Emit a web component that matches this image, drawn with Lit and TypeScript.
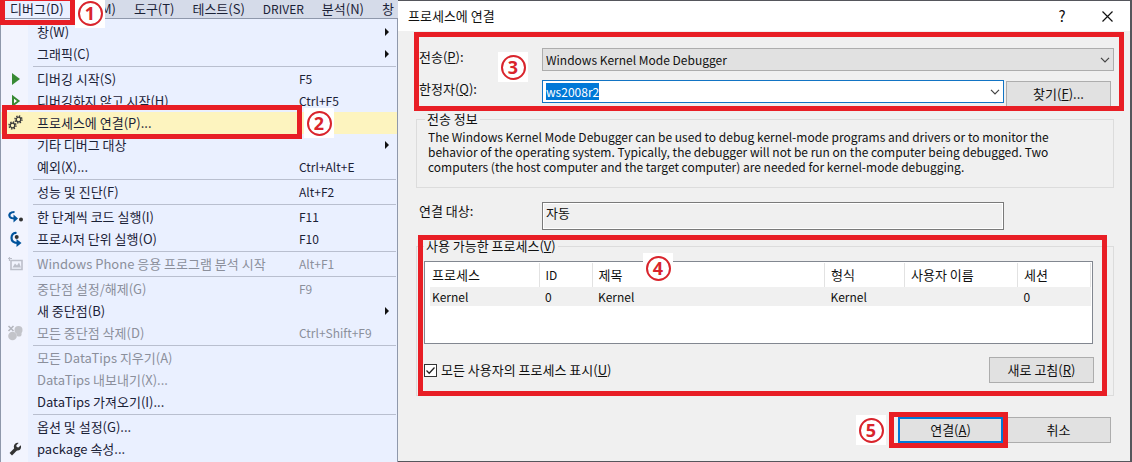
import { LitElement, html, css, svg, nothing } from "lit";
import { customElement, property, query } from "lit/decorators.js";
import { classMap } from "lit/directives/class-map.js";

type Item = {
  label: string;
  keys?: string;
  icon?: string;
  sub?: boolean;
  disabled?: boolean;
  active?: boolean;
};

const groups: Item[][] = [
  [
    { label: "창(W)", sub: true },
    { label: "그래픽(C)", sub: true },
  ],
  [
    { label: "디버깅 시작(S)", keys: "F5", icon: "play" },
    { label: "디버깅하지 않고 시작(H)", keys: "Ctrl+F5", icon: "playOutline" },
    { label: "프로세스에 연결(P)...", icon: "gears", active: true },
    { label: "기타 디버그 대상", sub: true },
    { label: "예외(X)...", keys: "Ctrl+Alt+E" },
  ],
  [{ label: "성능 및 진단(F)", keys: "Alt+F2" }],
  [
    { label: "한 단계씩 코드 실행(I)", keys: "F11", icon: "stepInto" },
    { label: "프로시저 단위 실행(O)", keys: "F10", icon: "stepOver" },
  ],
  [{ label: "Windows Phone 응용 프로그램 분석 시작", keys: "Alt+F1", icon: "analysis", disabled: true }],
  [
    { label: "중단점 설정/해제(G)", keys: "F9", disabled: true },
    { label: "새 중단점(B)", sub: true },
    { label: "모든 중단점 삭제(D)", keys: "Ctrl+Shift+F9", icon: "breakpoints", disabled: true },
  ],
  [
    { label: "모든 DataTips 지우기(A)", disabled: true },
    { label: "DataTips 내보내기(X)...", disabled: true },
    { label: "DataTips 가져오기(I)..." },
  ],
  [{ label: "옵션 및 설정(G)..." }, { label: "package 속성...", icon: "wrench" }],
];

const icons: Record<string, unknown> = {
  play: svg`<path d="M5 2v12l8-6z" fill="#388a34"/>`,
  playOutline: svg`<path d="M6 3.800v8.400L11.500 8z" fill="#fff" stroke="#388a34" stroke-width="2"/>`,
  gears: svg`
    <g fill="none" stroke="#3a3a3a">
      <circle cx="11.500" cy="4.500" r="2.300" stroke-width="1.300"/>
      <circle cx="11.500" cy="4.500" r="3.500" stroke-width="1.400" stroke-dasharray="1.375"/>
      <circle cx="5.500" cy="10.500" r="2.300" stroke-width="1.300"/>
      <circle cx="5.500" cy="10.500" r="3.500" stroke-width="1.400" stroke-dasharray="1.375"/>
    </g>`,
  stepInto: svg`
    <path d="M7.500 3C3 3 1.500 5.500 2.800 7.800 3.700 9.300 5.500 9.500 8 9.500" fill="none" stroke="#00539c" stroke-width="2.200"/>
    <path d="M6.500 5.500l4.500 4-4.500 4z" fill="#00539c"/>
    <circle cx="14" cy="10.500" r="2" fill="#333"/>`,
  stepOver: svg`
    <path d="M9.500 2C6 1.500 4.500 4 4.500 7c0 3.500 2.500 5 7 5" fill="none" stroke="#00539c" stroke-width="2.200"/>
    <path d="M9.500 8l5 4-5 4z" fill="#00539c"/>
    <circle cx="9.700" cy="6" r="2" fill="#333"/>`,
  analysis: svg`
    <g fill="none" stroke="#bcbfca">
      <path d="M4 4.500h11v9h-11z" stroke-width="1.600"/>
      <path d="M1 2.500h4M2.500 1v4" stroke-width="1.200"/>
    </g>
    <path d="M5.500 11.500l2.500-4 2 2 2-3 2 5z" fill="#bcbfca"/>`,
  breakpoints: svg`
    <g fill="#c3c4ca">
      <circle cx="11.500" cy="5" r="4"/><circle cx="5.500" cy="11" r="4.300"/><circle cx="12" cy="9" r="2.600"/>
    </g>
    <path d="M1.500 1l5 5M6.500 1l-5 5" stroke="#b4b6be" stroke-width="1.600"/>`,
  wrench: svg`
    <path d="M3.800 13.200L9 8" stroke="#333" stroke-width="3.400" fill="none"/>
    <path d="M13.800 4.200l-2.400 2.200-1.700-.5-.4-1.600L11.600 2C9.500 1.400 7 3 6.800 5.500c-.1 3 2.200 4.300 4.200 4 2.500-.3 3.600-2.800 2.800-5.300z" fill="#333"/>`,
};

const chevron = html`<svg class="chevron" viewBox="0 0 10 6" aria-hidden="true">
  <path d="M1 .8l4 4 4-4" fill="none" stroke="#444" stroke-width="1.200" />
</svg>`;

const textBase = css`
  :host {
    font-family: "Noto Sans CJK KR", sans-serif;
    font-size: 13px;
    line-height: 18px;
  }
  * {
    box-sizing: border-box;
  }
  button,
  input,
  select {
    font: inherit;
    color: inherit;
    margin: 0;
    border-radius: 0;
  }
  .latin {
    font-size: 12px;
  }
`;

@customElement("step-mark")
class StepMark extends LitElement {
  @property() n = "";
  static styles = css`
    :host {
      position: absolute;
      z-index: 3;
      display: grid;
      place-items: center;
      width: 30px;
      height: 30px;
      background: #fff;
      pointer-events: none;
    }
    .ring {
      box-sizing: border-box;
      display: grid;
      place-items: center;
      width: 25px;
      height: 25px;
      border: 2px solid #d9242c;
      border-radius: 50%;
      color: #d9242c;
      font: bold 18px/20px "Noto Sans", sans-serif;
    }
  `;
  render() {
    return html`<span class="ring">${this.n}</span>`;
  }
}

@customElement("debug-menu")
class DebugMenu extends LitElement {
  static styles = [
    textBase,
    css`
      :host {
        display: flex;
        flex-direction: column;
        position: relative;
        color: #1b2237;
      }
      .bar {
        display: flex;
        height: 18px;
        overflow: hidden;
        background: #d5dbe9;
      }
      .bar button {
        flex: none;
        padding: 0 9px;
        border: 0;
        background: none;
        white-space: nowrap;
      }
      .bar .open {
        padding: 0 12px 0 10px;
        background: #eaf0ff;
      }
      .panel {
        flex: 1;
        padding: 2px 0 0;
        border: solid #8f98ab;
        border-width: 1px 1px 0 1px;
        background: linear-gradient(90deg, #f2f4fe 27px, #eaf0ff 27px);
      }
      .group + .group {
        padding-top: 3px;
        background: linear-gradient(#b9bfcf, #b9bfcf) 32px 1px / calc(100% - 33px) 1px no-repeat;
      }
      .item {
        display: grid;
        grid-template-columns: 36px 262px 1fr 12px;
        align-items: center;
        width: 100%;
        height: 22px;
        padding: 0;
        border: 0;
        background: none;
        text-align: left;
        white-space: nowrap;
      }
      .item:disabled {
        color: #8b8f9b;
      }
      .active {
        background: #fdf4bf;
      }
      .icon {
        display: block;
        width: 16px;
        height: 16px;
        margin-left: 6px;
      }
      .arrow {
        width: 4px;
        height: 8px;
      }
      .frame {
        position: absolute;
        z-index: 2;
        border: 5px solid #e81e25;
        pointer-events: none;
      }
      .frame-bar {
        top: -4px;
        left: 0;
        width: 75px;
        height: 29px;
      }
      .frame-item {
        top: 105px;
        left: 2px;
        width: 300px;
        height: 34px;
      }
      .mark-1 {
        top: -2px;
        left: 75px;
      }
      .mark-2 {
        top: 108px;
        left: 304px;
      }
    `,
  ];
  render() {
    return html`
      <nav class="bar">
        <button class="open">디버그(D)</button>
        <button>팀(M)</button>
        <button>도구(T)</button>
        <button>테스트(S)</button>
        <button class="latin">DRIVER</button>
        <button>분석(N)</button>
        <button>창</button>
      </nav>
      <div class="panel" role="menu">
        ${groups.map(
          (g) => html`<div class="group" role="group">
            ${g.map(
              (i) => html`<button
                role="menuitem"
                class=${classMap({ item: true, active: !!i.active })}
                ?disabled=${!!i.disabled}
              >
                <span>
                  ${i.icon
                    ? html`<svg class="icon" viewBox="0 0 16 16" aria-hidden="true">${icons[i.icon]}</svg>`
                    : nothing}
                </span>
                <span>${i.label}</span>
                <span class="latin">${i.keys ?? ""}</span>
                ${i.sub
                  ? html`<svg class="arrow" viewBox="0 0 4 8" aria-hidden="true"><path d="M0 0l4 4-4 4z" fill="#111" /></svg>`
                  : nothing}
              </button>`
            )}
          </div>`
        )}
      </div>
      <span class="frame frame-bar"></span>
      <step-mark class="mark-1" n="1"></step-mark>
      <span class="frame frame-item"></span>
      <step-mark class="mark-2" n="2"></step-mark>
    `;
  }
}

@customElement("attach-dialog")
class AttachDialog extends LitElement {
  @query("#qualifier") qualifier!: HTMLInputElement;

  firstUpdated() {
    this.qualifier.focus();
    this.qualifier.select();
  }

  static styles = [
    textBase,
    css`
      :host {
        display: flex;
        flex-direction: column;
        color: #111;
        background: #f0f0f0;
        border: solid #55565c;
        border-width: 1px 2px 1px 0;
      }
      .title {
        display: flex;
        align-items: center;
        height: 30px;
        padding: 0 12px 0 10px;
        background: #fff;
      }
      h1 {
        flex: 1;
        margin: 0;
        font-size: inherit;
        font-weight: normal;
      }
      .title button {
        display: grid;
        place-items: center;
        width: 22px;
        height: 22px;
        padding: 0;
        border: 0;
        background: none;
        font-size: 15px;
      }
      .title svg {
        width: 11px;
        height: 11px;
      }
      .title .help {
        margin-right: 23px;
      }
      .body {
        display: flex;
        flex-direction: column;
        padding: 17px 16px 17px 18px;
      }
      .section {
        position: relative;
        display: grid;
        grid-template-columns: 126px 1fr 110px;
        row-gap: 9px;
      }
      .section label,
      .target label {
        padding-left: 3px;
      }
      .pick {
        position: relative;
        display: grid;
      }
      .wide {
        grid-column: 2 / -1;
      }
      select {
        height: 23px;
        padding: 0 3px;
        border: 1px solid #adadad;
        background: #e1e1e1;
        appearance: none;
      }
      .chevron {
        position: absolute;
        right: 4px;
        top: 9px;
        width: 10px;
        height: 6px;
        pointer-events: none;
      }
      #qualifier {
        width: 100%;
        height: 23px;
        padding: 0 20px 0 3px;
        border: 1px solid #1274c4;
        outline: 0;
        background: #fff;
      }
      #qualifier::selection {
        background: #0078d7;
        color: #fff;
      }
      .btn {
        width: 105px;
        height: 26px;
        padding: 0;
        border: 1px solid #adadad;
        background: #e1e1e1;
        text-align: center;
      }
      .find {
        margin: 1px 0 -4px 2px;
      }
      .default {
        border: 2px solid #0078d7;
      }
      fieldset {
        position: relative;
        min-width: 0;
        margin: 0;
        padding: 0 8px;
        border: 1px solid #dcdcdc;
      }
      legend {
        height: 18px;
        padding: 0 2px;
      }
      .info {
        margin-top: 7px;
      }
      .info p {
        margin: 1px 0 13px;
        padding: 0 42px 0 3px;
        line-height: 15px;
      }
      .target {
        display: grid;
        grid-template-columns: 126px 1fr 110px;
        margin-top: 14px;
      }
      .target input {
        min-width: 0;
        height: 28px;
        padding: 0 3px 8px;
        border: 1px solid #7a7a7a;
        outline: 1px solid #fff;
        outline-offset: -2px;
        background: #f0f0f0;
      }
      .processes {
        margin-top: 7px;
        padding: 0 20px 12px 7px;
      }
      .list {
        height: 83px;
        margin-top: 6px;
        padding: 1px 1px 1px 5px;
        border: 1px solid #828790;
        background: #fff;
      }
      table {
        width: 100%;
        border-collapse: collapse;
        table-layout: fixed;
      }
      th,
      td {
        padding: 0 0 0 6px;
        font-weight: normal;
        text-align: left;
        white-space: nowrap;
      }
      th {
        height: 24px;
        border-right: 1px solid #e2e2e2;
      }
      td {
        height: 19px;
        background: #f0f0f0;
      }
      th:first-child,
      td:first-child {
        padding-left: 2px;
      }
      .c1 {
        width: 109px;
      }
      .c2 {
        width: 53px;
      }
      .c4 {
        width: 80px;
      }
      .c5 {
        width: 113px;
      }
      .c6 {
        width: 73px;
      }
      .below {
        display: flex;
        justify-content: space-between;
        align-items: center;
        margin: 13px -1px 0 0;
      }
      .check {
        display: flex;
        align-items: center;
        gap: 4px;
      }
      .check input {
        appearance: none;
        width: 13px;
        height: 13px;
        border: 1px solid #333;
        background: #fff;
      }
      .tick {
        position: relative;
        display: grid;
      }
      .tick svg {
        position: absolute;
        inset: 1px;
        width: 11px;
        height: 11px;
        pointer-events: none;
      }
      .actions {
        position: relative;
        display: flex;
        justify-content: flex-end;
        gap: 3px;
        margin: 21px 3px 0 0;
      }
      .frame {
        position: absolute;
        z-index: 2;
        border: 5px solid #e81e25;
        pointer-events: none;
      }
      .section .frame {
        inset: -16px -10px -8px -2px;
      }
      .processes .frame {
        inset: -20px 6px -1px 1px;
      }
      .actions .frame {
        inset: -5px 103px -5px auto;
        width: 119px;
      }
      .mark-3 {
        top: 4px;
        left: 82px;
      }
      .mark-4 {
        top: -2px;
        left: 226px;
      }
      .mark-5 {
        top: -2px;
        right: 225px;
      }
    `,
  ];
  render() {
    return html`
      <header class="title">
        <h1>프로세스에 연결</h1>
        <button class="help" aria-label="도움말">?</button>
        <button aria-label="닫기">
          <svg viewBox="0 0 11 11" aria-hidden="true"><path d="M.5 .5l10 10M10.500 .5l-10 10" stroke="#111" stroke-width="1.200" /></svg>
        </button>
      </header>
      <div class="body">
        <div class="section">
          <label for="transport">전송(<u>P</u>):</label>
          <div class="pick wide">
            <select id="transport" class="latin">
              <option>Windows Kernel Mode Debugger</option>
            </select>
            ${chevron}
          </div>
          <label for="qualifier">한정자(<u>Q</u>):</label>
          <div class="pick"><input id="qualifier" class="latin" value="ws2008r2" spellcheck="false" />${chevron}</div>
          <button class="btn find">찾기(<u>F</u>)...</button>
          <span class="frame"></span>
          <step-mark class="mark-3" n="3"></step-mark>
        </div>
        <fieldset class="info">
          <legend>전송 정보</legend>
          <p class="latin">
            The Windows Kernel Mode Debugger can be used to debug kernel-mode programs and drivers or to monitor the
            behavior of the operating system. Typically, the debugger will not be run on the computer being debugged. Two
            computers (the host computer and the target computer) are needed for kernel-mode debugging.
          </p>
        </fieldset>
        <div class="target">
          <label for="target">연결 대상:</label>
          <input id="target" value="자동" readonly />
        </div>
        <fieldset class="processes">
          <legend>사용 가능한 프로세스(<u>V</u>)</legend>
          <div class="list">
            <table>
              <colgroup>
                <col class="c1" /><col class="c2" /><col /><col class="c4" /><col class="c5" /><col class="c6" />
              </colgroup>
              <thead>
                <tr>
                  <th>프로세스</th><th class="latin">ID</th><th>제목</th><th>형식</th><th>사용자 이름</th><th>세션</th>
                </tr>
              </thead>
              <tbody class="latin">
                <tr>
                  <td>Kernel</td><td>0</td><td>Kernel</td><td>Kernel</td><td></td><td>0</td>
                </tr>
              </tbody>
            </table>
          </div>
          <div class="below">
            <label class="check">
              <span class="tick">
                <input type="checkbox" checked />
                <svg viewBox="0 0 11 11" aria-hidden="true"><path d="M1.500 5.500l2.700 2.700 5.300-5.700" fill="none" stroke="#222" stroke-width="1.300" /></svg>
              </span>
              <span>모든 사용자의 프로세스 표시(<u>U</u>)</span>
            </label>
            <button class="btn">새로 고침(<u>R</u>)</button>
          </div>
          <span class="frame"></span>
          <step-mark class="mark-4" n="4"></step-mark>
        </fieldset>
        <div class="actions">
          <button class="btn default">연결(<u>A</u>)</button>
          <button class="btn">취소</button>
          <span class="frame"></span>
          <step-mark class="mark-5" n="5"></step-mark>
        </div>
      </div>
    `;
  }
}

@customElement("app-root")
class AppRoot extends LitElement {
  static styles = css`
    :host {
      display: flex;
      min-height: 100vh;
      overflow: hidden;
    }
    debug-menu {
      flex: none;
      width: 398px;
    }
    attach-dialog {
      flex: 1;
      min-width: 0;
    }
  `;
  render() {
    return html`<debug-menu></debug-menu><attach-dialog></attach-dialog>`;
  }
}
